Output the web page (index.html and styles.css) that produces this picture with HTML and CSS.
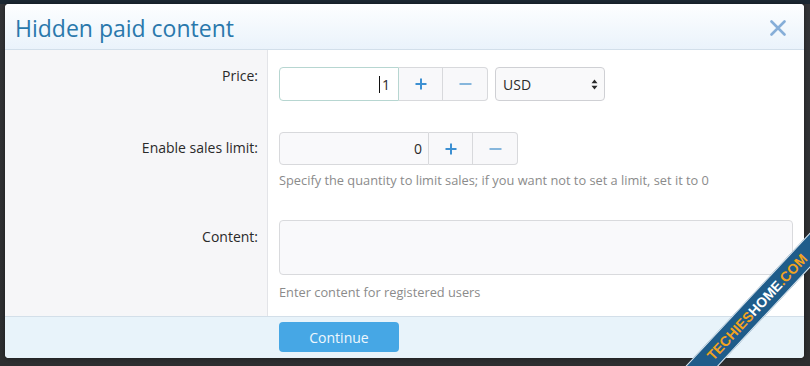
FILE: index.html
```html
<!DOCTYPE html>
<html lang="en">
<head>
<meta charset="utf-8">
<title>Hidden paid content</title>
<link rel="stylesheet" href="styles.css">
</head>
<body>
<div class="page">
  <div class="dialog">
    <header class="dlg-head">
      <h1 class="dlg-title">Hidden paid content</h1>
      <span class="close" aria-label="Close">
        <svg width="16" height="16" viewBox="0 0 16 16"><path d="M1.5 1.5 L14.5 14.5 M14.5 1.5 L1.5 14.5" stroke="#86aed8" stroke-width="2.6" stroke-linecap="round" fill="none"/></svg>
      </span>
    </header>
    <div class="dlg-body">
      <div class="row row-price">
        <div class="lbl">Price:</div>
        <div class="fld">
          <div class="controls">
            <div class="spin">
              <div class="spin-input spin-focus price-input"><span class="caret"></span>1</div>
              <div class="spin-btn"><svg width="12" height="12" viewBox="0 0 12 12"><path d="M6 0.5 V11.5 M0.5 6 H11.5" stroke="#3d90d2" stroke-width="2" fill="none"/></svg></div>
              <div class="spin-btn spin-last"><svg width="13" height="12" viewBox="0 0 13 12"><path d="M0.5 6 H12.5" stroke="#86b6dc" stroke-width="2" fill="none"/></svg></div>
            </div>
            <div class="select">USD
              <svg class="sel-arrows" width="7" height="11" viewBox="0 0 7 11"><path d="M3.5 0.5 L6.5 4.3 H0.5 Z M3.5 10.5 L6.5 6.7 H0.5 Z" fill="#2a2a2a"/></svg>
            </div>
          </div>
        </div>
      </div>
      <div class="row row-sales">
        <div class="lbl">Enable sales limit:</div>
        <div class="fld">
          <div class="spin">
            <div class="spin-input sales-input">0</div>
            <div class="spin-btn"><svg width="12" height="12" viewBox="0 0 12 12"><path d="M6 0.5 V11.5 M0.5 6 H11.5" stroke="#3d90d2" stroke-width="2" fill="none"/></svg></div>
            <div class="spin-btn spin-last"><svg width="13" height="12" viewBox="0 0 13 12"><path d="M0.5 6 H12.5" stroke="#86b6dc" stroke-width="2" fill="none"/></svg></div>
          </div>
          <p class="hint hint-sales">Specify the quantity to limit sales; if you want not to set a limit, set it to 0</p>
        </div>
      </div>
      <div class="row row-content">
        <div class="lbl">Content:</div>
        <div class="fld">
          <div class="textarea"></div>
          <p class="hint hint-content">Enter content for registered users</p>
        </div>
      </div>
    </div>
    <footer class="dlg-foot">
      <button class="btn-continue" type="button">Continue</button>
    </footer>
  </div>
</div>
<div class="ribbon-clip">
  <div class="ribbon"><span class="r-orange">TECHIES</span><span class="r-white">HOME</span><span class="r-orange">.COM</span></div>
</div>
</body>
</html>
```
FILE: styles.css
```css
html, body {
  margin: 0;
  height: 100%;
  overflow: hidden;
}

body {
  position: relative;
  background: linear-gradient(#1c2833 0, #1c2833 4px, #333437 4px, #2d2e30 100%);
  font-family: "Open Sans", "Noto Sans", sans-serif;
}

.page {
  padding: 4px 6px 8px 5px;
}

.dialog {
  width: 799px;
  height: 354px;
  background: #fff;
  border-radius: 4px;
  display: flex;
  flex-direction: column;
  overflow: hidden;
  box-shadow: 0 0 4px rgba(0, 0, 0, 0.45);
}

.dlg-head {
  height: 45px;
  flex: none;
  border-bottom: 1px solid #d2dfea;
  background: linear-gradient(#fdfeff, #eaf3fb);
  display: flex;
  align-items: center;
  justify-content: space-between;
  padding: 0 18px 0 10px;
}

.dlg-title {
  margin: 0;
  padding-top: 3px;
  font-weight: 400;
  font-size: 23px;
  line-height: 28px;
  color: #2a78ac;
}

.close {
  display: flex;
  width: 16px;
  height: 16px;
  margin-top: 2px;
}

.dlg-body {
  flex: 1;
  display: flex;
  flex-direction: column;
}

.row {
  display: grid;
  grid-template-columns: 263px 1fr;
}

.row-content {
  flex: 1;
}

.lbl {
  background: #f6f6f8;
  border-right: 1px solid #e3e4e8;
  text-align: right;
  padding-right: 9px;
  font-size: 14px;
  line-height: 20px;
  color: #2a2a2a;
}

.fld {
  padding: 0 11px 0 11px;
}

.row-price .lbl { padding-top: 16px; }
.row-price .fld { padding-top: 17px; }
.row-sales .lbl { padding-top: 37px; }
.row-sales .fld { padding-top: 31px; }
.row-content .lbl { padding-top: 38px; }
.row-content .fld { padding-top: 31px; padding-bottom: 15px; }

.controls {
  display: flex;
  gap: 7px;
}

.spin {
  display: flex;
  height: 34px;
}

.row-sales .spin {
  height: 33px;
}

.spin-input {
  box-sizing: border-box;
  border: 1px solid #d8d9dc;
  border-radius: 4px 0 0 4px;
  background: #f9f9fb;
  display: flex;
  align-items: center;
  justify-content: flex-end;
  font-size: 14px;
  color: #2a2a2a;
}

.price-input {
  width: 120px;
  padding-right: 8px;
}

.sales-input {
  width: 150px;
  padding-right: 6px;
}

.spin-focus {
  background: #fff;
  border-color: #b7d6d1;
}

.caret {
  width: 1px;
  height: 17px;
  background: #111;
  margin-right: 2px;
}

.spin-btn {
  box-sizing: border-box;
  width: 44px;
  border: 1px solid #d8d9dc;
  border-left: none;
  background: #f8f8fa;
  display: flex;
  align-items: center;
  justify-content: center;
}

.spin-last {
  width: 45px;
  border-radius: 0 4px 4px 0;
}

.select {
  box-sizing: border-box;
  width: 110px;
  height: 34px;
  border: 1px solid #cfd0d4;
  border-radius: 4px;
  background: #f9f9fa;
  display: flex;
  align-items: center;
  justify-content: space-between;
  padding: 0 6px 0 7px;
  font-size: 14px;
  color: #2a2a2a;
}

.textarea {
  box-sizing: border-box;
  height: 55px;
  border: 1px solid #d9dadd;
  border-radius: 4px;
  background: #f9f9fb;
}

.hint {
  margin: 0;
  font-size: 12.8px;
  line-height: 18px;
  color: #8b8b8b;
}

.hint-sales { margin-top: 6px; }
.hint-content { margin-top: 8px; }

.dlg-foot {
  flex: none;
  height: 41px;
  border-top: 1px solid #d3dfe9;
  background: #e8f3fa;
  padding: 5px 0 0 274px;
}

.btn-continue {
  width: 120px;
  height: 30px;
  border: none;
  border-radius: 4px;
  background: #46a7e5;
  color: #eef7fd;
  font-family: "Open Sans", "Noto Sans", sans-serif;
  font-size: 14px;
  padding: 0;
}

.ribbon-clip {
  position: absolute;
  inset: 0;
  overflow: hidden;
  pointer-events: none;
}

.ribbon {
  position: absolute;
  left: 597px;
  top: 295px;
  width: 320px;
  height: 24px;
  box-sizing: border-box;
  transform: rotate(-47deg);
  background: #1f5c8a;
  border-top: 1px solid rgba(255, 255, 255, 0.85);
  border-bottom: 1px solid rgba(255, 255, 255, 0.85);
  display: flex;
  align-items: center;
  justify-content: center;
  font-family: "Liberation Sans", Arial, sans-serif;
  font-weight: 700;
  font-size: 14px;
  line-height: 1;
}

.r-orange { color: #f3a31e; }
.r-white { color: #ffffff; }
```
